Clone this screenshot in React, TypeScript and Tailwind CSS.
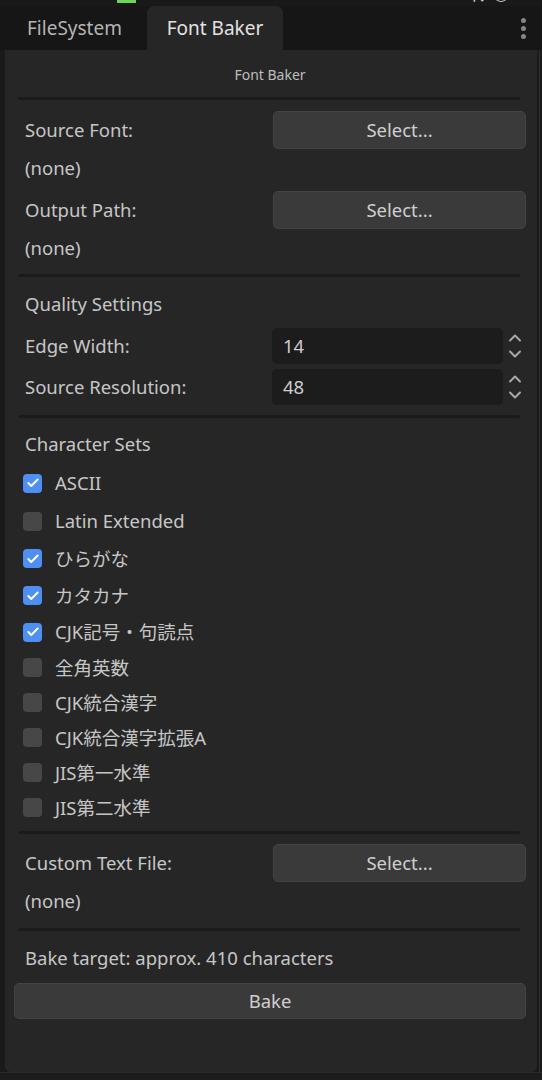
import { Check } from "lucide-react";

const FONT = { fontFamily: '"Noto Sans", "Noto Sans CJK JP", sans-serif' };

interface CharSet {
  label: string;
  checked: boolean;
  h: string;
}

const charSets: CharSet[] = [
  { label: "ASCII", checked: true, h: "h-[38px]" },
  { label: "Latin Extended", checked: false, h: "h-[38px]" },
  { label: "ひらがな", checked: true, h: "h-[37px]" },
  { label: "カタカナ", checked: true, h: "h-[37px]" },
  { label: "CJK記号・句読点", checked: true, h: "h-[36px]" },
  { label: "全角英数", checked: false, h: "h-[35px]" },
  { label: "CJK統合漢字", checked: false, h: "h-[35px]" },
  { label: "CJK統合漢字拡張A", checked: false, h: "h-[35px]" },
  { label: "JIS第一水準", checked: false, h: "h-[35px]" },
  { label: "JIS第二水準", checked: false, h: "h-[35px]" },
];

const Separator = ({ mt }: { mt: string }) => (
  <div className={`${mt} ml-[4px] mr-[6px] h-[3px] bg-[#1b1b1b] rounded-full`} />
);

const SelectButton = () => (
  <button className="w-[253px] h-[38px] rounded-[5px] bg-[#3a3a3a] border border-[#434343] text-[18.5px] text-[#cfcfcf]">
    Select...
  </button>
);

const FileRow = ({ label, mt }: { label: string; mt: string }) => (
  <>
    <div className={`${mt} flex items-center h-[38px]`}>
      <span className="flex-1 pl-[11px] text-[18.5px] text-[#c6c6c6]">{label}</span>
      <SelectButton />
    </div>
    <div className="h-[38px] flex items-center pl-[11px] text-[18.5px] text-[#c6c6c6]">(none)</div>
  </>
);

const Chevron = ({ up }: { up?: boolean }) => (
  <svg width="14" height="9" viewBox="0 0 14 9" className="block">
    <path
      d={up ? "M2 7.5 L7 2.5 L12 7.5" : "M2 1.5 L7 6.5 L12 1.5"}
      fill="none"
      stroke="#a9a9a9"
      strokeWidth="2"
      strokeLinecap="round"
      strokeLinejoin="round"
    />
  </svg>
);

const SpinRow = ({ label, value, mt }: { label: string; value: string; mt: string }) => (
  <div className={`${mt} flex items-center h-[36px]`}>
    <span className="w-[258px] pl-[11px] text-[18.5px] text-[#c6c6c6]">{label}</span>
    <div className="w-[231px] h-[36px] rounded-[5px] bg-[#1c1c1c] flex items-center pl-[11px] text-[18.5px] text-[#cdcdcd]">
      {value}
    </div>
    <div className="ml-[5px] flex flex-col gap-[8px]">
      <Chevron up />
      <Chevron />
    </div>
  </div>
);

export default function App() {
  return (
    <div className="w-[542px] h-[1080px] bg-[#1a1a1a] flex flex-col overflow-hidden" style={FONT}>
      {/* clipped strip from the dock above */}
      <div className="h-[6px] overflow-hidden flex items-start bg-[#191919]">
        <div className="ml-[117px] w-[19px] h-[3px] bg-[#6fd45a]" />
        <span className="ml-[11px] -mt-[16px] text-[18px] leading-[18px] text-[#d0d0d0]">Pointer</span>
        <span className="ml-auto mr-[32px] -mt-[16px] text-[18px] leading-[18px] text-[#e0e0e0]">⇅ ◎</span>
      </div>

      {/* tab bar */}
      <div className="h-[44px] bg-[#161616] flex items-stretch pl-[6px] pr-[16px]">
        <div className="w-[141px] flex items-center pl-[21px] text-[19px] text-[#b4b4b4]">FileSystem</div>
        <div className="w-[136px] rounded-t-[7px] bg-[#262626] flex items-center justify-center text-[19px] text-[#e2e2e2]">
          Font Baker
        </div>
        <div className="ml-auto flex flex-col justify-center gap-[3px]">
          {[0, 1, 2].map((i) => (
            <span key={i} className="block w-[5px] h-[5px] rounded-full bg-[#858585]" />
          ))}
        </div>
      </div>

      <div className="flex h-[1022px]">
        <div className="ml-[5px] w-[532px] bg-[#262626] rounded-b-[6px]">
          <div className="ml-[9px] mr-[11px] flex flex-col">
            <div className="mt-[12px] h-[24px] flex items-center justify-center text-[14px] text-[#bdbdbd]">
              Font Baker
            </div>
            <Separator mt="mt-[11px]" />

            <FileRow label="Source Font:" mt="mt-[11px]" />
            <FileRow label="Output Path:" mt="mt-[4px]" />

            <Separator mt="mt-[7px]" />
            <div className="mt-[10px] h-[34px] flex items-center pl-[11px] text-[18.5px] text-[#c6c6c6]">
              Quality Settings
            </div>
            <SpinRow label="Edge Width:" value="14" mt="mt-[7px]" />
            <SpinRow label="Source Resolution:" value="48" mt="mt-[5px]" />

            <Separator mt="mt-[10px]" />
            <div className="mt-[9px] h-[34px] flex items-center pl-[11px] text-[18.5px] text-[#c6c6c6]">
              Character Sets
            </div>
            <div className="mt-[3px] flex flex-col">
              {charSets.map((c) => (
                <div key={c.label} className={`${c.h} flex items-center pl-[9px]`}>
                  <span
                    className={`w-[19px] h-[19px] rounded-[4px] flex items-center justify-center ${
                      c.checked ? "bg-[#4d8ff2]" : "bg-[#474747]"
                    }`}
                  >
                    {c.checked && <Check size={14} strokeWidth={3.5} color="#ffffff" />}
                  </span>
                  <span className="ml-[13px] text-[18.5px] text-[#c6c6c6]">{c.label}</span>
                </div>
              ))}
            </div>

            <Separator mt="mt-[6px]" />
            <FileRow label="Custom Text File:" mt="mt-[10px]" />

            <Separator mt="mt-[8px]" />
            <div className="mt-[10px] h-[34px] flex items-center pl-[11px] text-[18.5px] text-[#c6c6c6]">
              Bake target: approx. 410 characters
            </div>
            <button className="mt-[8px] h-[36px] w-full rounded-[5px] bg-[#3a3a3a] border border-[#434343] text-[18.5px] text-[#cfcfcf]">
              Bake
            </button>
          </div>
        </div>
        <div className="flex-1 flex">
          <div className="ml-[2px] w-[1px] bg-[#303030]" />
        </div>
      </div>

      <div className="flex-1 bg-[#1c1c1c] border-t border-[#2a2a2a]" />
    </div>
  );
}
